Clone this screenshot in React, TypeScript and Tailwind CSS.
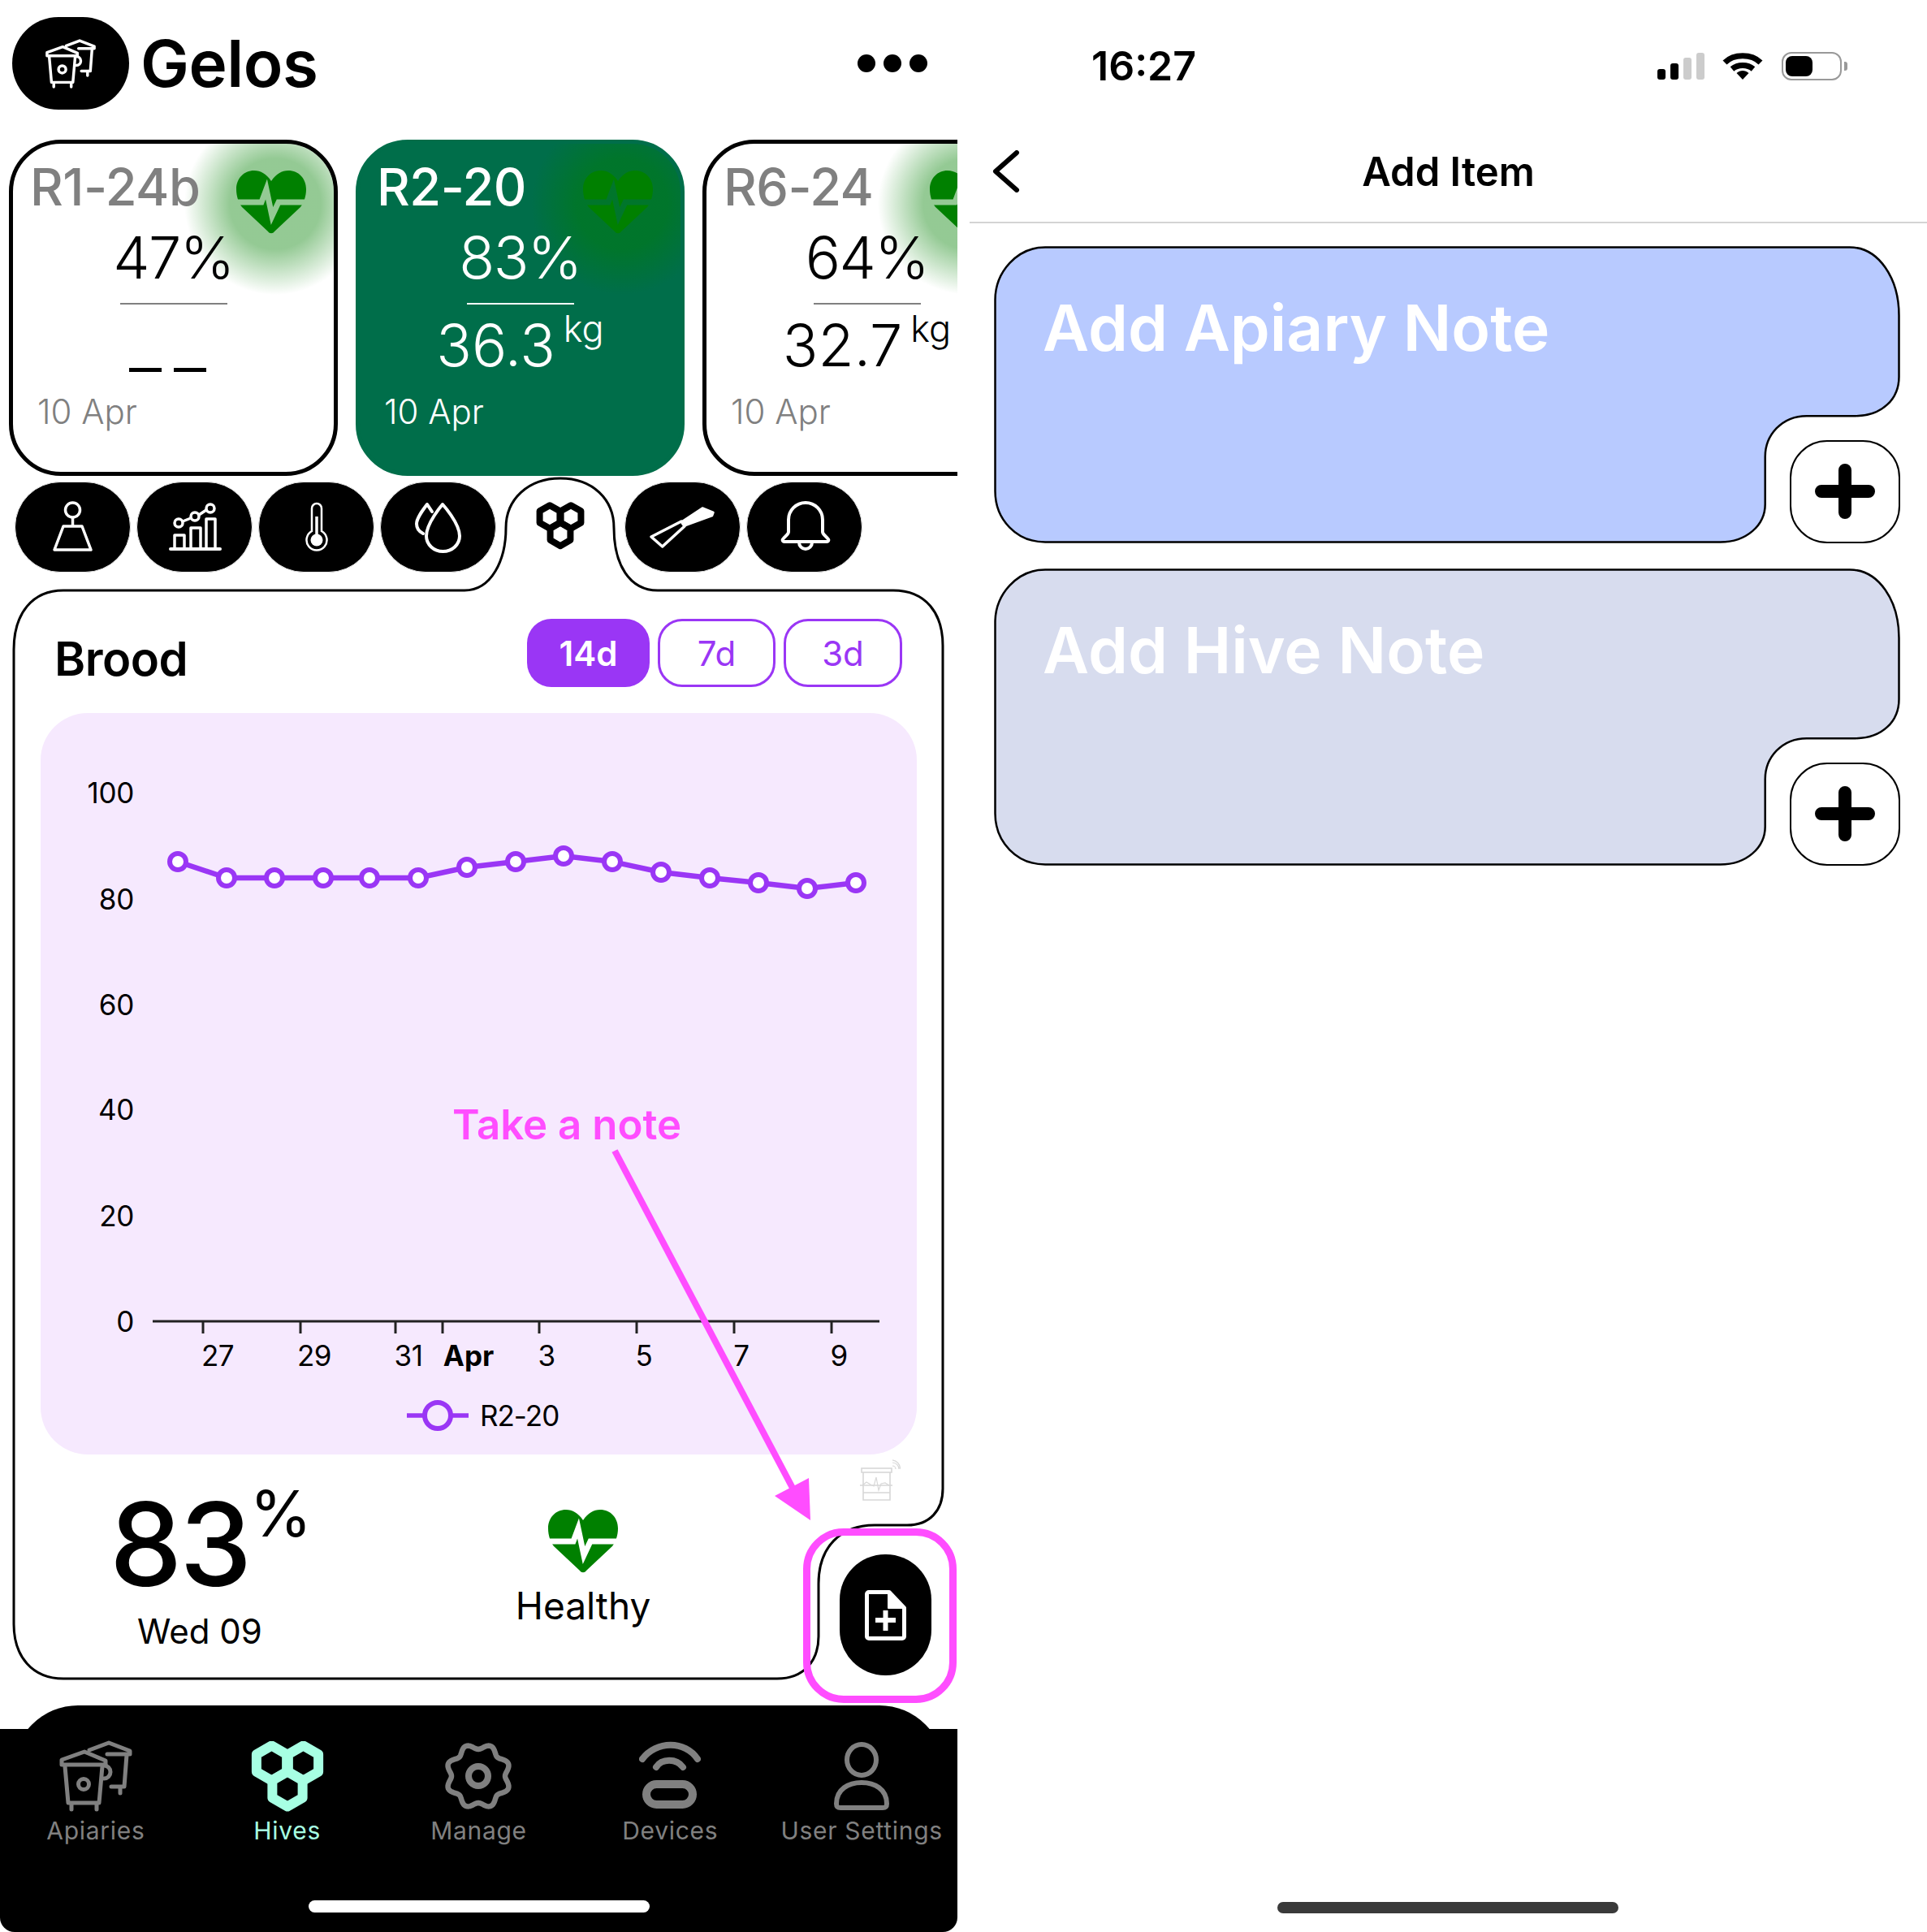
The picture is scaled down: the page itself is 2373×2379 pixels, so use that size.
import React from "react";

const hex = (cx: number, cy: number, r: number) => {
  const w = r * 0.866;
  return `M${cx} ${cy - r}L${cx + w} ${cy - r / 2}V${cy + r / 2}L${cx} ${cy + r}L${cx - w} ${cy + r / 2}V${cy - r / 2}Z`;
};

function Honeycomb({ className, stroke }: { className: string; stroke: string }) {
  return (
    <svg viewBox="0 0 90 87" className={className} fill="none" stroke={stroke} strokeWidth={12} strokeLinejoin="round">
      <path d={hex(25.5, 27, 21.5)} />
      <path d={hex(64.5, 27, 21.5)} />
      <path d={hex(45, 59, 21.5)} />
    </svg>
  );
}

function HiveIcon({ className, stroke }: { className: string; stroke: string }) {
  return (
    <svg viewBox="0 0 92 88" className={className} fill="none" stroke={stroke} strokeWidth={5} strokeLinejoin="round" strokeLinecap="round">
      <path d="M4 30V24L32 14L58 25V30Z" />
      <path d="M8 32L12 77H50L54 32" />
      <path d="M16 78V85M47 78V85" />
      <circle cx="31" cy="54" r="6.5" />
      <path d="M38 12L62 3L88 13V17H60" />
      <path d="M84 18L81 57H65" />
      <path d="M76 58V65" />
      <path d="M56 31a8 8 0 0 1 0 16" />
    </svg>
  );
}

function Heart({ id, className }: { id: string; className: string }) {
  return (
    <svg viewBox="0 0 86 78" className={className}>
      <mask id={id} maskUnits="userSpaceOnUse" x="0" y="0" width="86" height="78">
        <rect width="86" height="78" fill="white" />
        <polyline points="-2,39 31,39 37,23 44,56 52,39 88,39" fill="none" stroke="black" strokeWidth="7" />
      </mask>
      <path
        mask={`url(#${id})`}
        fill="#008000"
        d="M43 13C37 4 30 0 22 0C9 0 0 10 0 23C0 32 3 40 7 45L39 75C41 78 45 78 47 75L79 45C83 40 86 32 86 23C86 10 77 0 64 0C56 0 49 4 43 13Z"
      />
    </svg>
  );
}

function WeightIcon() {
  return (
    <svg viewBox="0 0 60 64" className="w-[60px] h-[64px]" fill="none" stroke="white" strokeWidth={3.5} strokeLinejoin="round">
      <circle cx="29.5" cy="11" r="9" />
      <path d="M29.5 20V31" />
      <path d="M18 31H41L52 60H7Z" />
    </svg>
  );
}

function BarsIcon() {
  return (
    <svg viewBox="0 0 68 62" className="w-[68px] h-[62px]" fill="none" stroke="white" strokeWidth={3.5} strokeLinejoin="round" strokeLinecap="round">
      <path d="M4 58H65" strokeWidth={4} />
      <path d="M9 57V41H21V57M29 57V32H41V57M48 57V21H59V57" />
      <circle cx="14" cy="26" r="5" />
      <circle cx="34" cy="18" r="5" />
      <circle cx="53" cy="8" r="5" />
      <path d="M19 24L29 20M39 16L48 10" />
    </svg>
  );
}

function ThermoIcon() {
  return (
    <svg viewBox="0 0 28 62" className="w-[28px] h-[62px]" fill="none" stroke="white" strokeWidth={2.5}>
      <path d="M8 36V8a6 6 0 0 1 12 0V36a12.5 12.5 0 1 1 -12 0Z" />
      <path d="M14 18V45" strokeWidth={3.5} />
      <circle cx="14" cy="47" r="7.5" fill="white" stroke="none" />
    </svg>
  );
}

function DropsIcon() {
  return (
    <svg viewBox="0 0 64 66" className="w-[64px] h-[66px]" fill="none" stroke="white" strokeWidth={4} strokeLinecap="round" strokeLinejoin="round">
      <path d="M37 5C37 5 17 28 17 44a20.5 19 0 0 0 41 0C58 28 37 5 37 5Z" />
      <path d="M24 14L18 5C12 13 5 22 5 29C5 35 9 39 13 41" />
    </svg>
  );
}

function ToolIcon() {
  return (
    <svg viewBox="0 0 86 56" className="w-[86px] h-[56px]" stroke="white" strokeLinejoin="round">
      <path d="M42 21L67 4.5L80.5 10L79 14L46 26Z" fill="white" strokeWidth={2.5} />
      <path d="M4 40L41 21L45 27L17.7 52Z" fill="none" strokeWidth={3.5} />
    </svg>
  );
}

function BellIcon() {
  return (
    <svg viewBox="0 0 66 64" className="w-[66px] h-[64px]" fill="none" stroke="white" strokeWidth={4} strokeLinejoin="round">
      <path d="M13 23a21 21 0 0 1 42 0V38C55 41 60 44 62 47a2 2 0 0 1 -2 3H8a2 2 0 0 1 -2 -3C8 44 13 41 13 38Z" />
      <path d="M26 51a8 8 0 0 0 16 0" />
    </svg>
  );
}

function GearIcon() {
  const pts: string[] = [];
  for (let i = 0; i < 160; i++) {
    const t = (i / 160) * Math.PI * 2 - Math.PI / 2;
    const r = 36.5 - 3.5 * Math.cos(8 * (t + Math.PI / 2));
    pts.push(`${(44 + r * Math.cos(t)).toFixed(2)},${(44 + r * Math.sin(t)).toFixed(2)}`);
  }
  return (
    <svg viewBox="0 0 88 88" className="w-[88px] h-[88px]" fill="none" stroke="#808080">
      <polygon points={pts.join(" ")} strokeWidth={6.5} strokeLinejoin="round" />
      <circle cx="44" cy="44" r="12" strokeWidth={8} />
    </svg>
  );
}

function DeviceIcon() {
  return (
    <svg viewBox="0 0 76 88" className="w-[76px] h-[88px]" fill="none" stroke="#808080" strokeLinecap="round">
      <path d="M3 22C20 -1 56 -1 71 22" strokeWidth={8} transform="translate(1 1)" />
      <path d="M21 33C28 22 46 22 54 33" strokeWidth={8} />
      <rect x="9" y="54" width="57" height="25" rx="12.5" strokeWidth={10} />
    </svg>
  );
}

function UserIcon() {
  return (
    <svg viewBox="0 0 72 88" className="w-[72px] h-[88px]" fill="none" stroke="#808080" strokeWidth={6} strokeLinejoin="round">
      <ellipse cx="36" cy="24" rx="18" ry="19" />
      <path d="M5 78C5 60 20 52 36 52C52 52 67 60 67 78C67 82 65 83 62 83H10C7 83 5 82 5 78Z" />
    </svg>
  );
}

function NoteDoc() {
  return (
    <svg viewBox="0 0 51 62" className="w-[51px] h-[62px]" fill="none" stroke="white" strokeWidth={5} strokeLinejoin="round">
      <path d="M5 2.5H30L48.5 22V57a2.5 2.5 0 0 1 -2.5 2.5H5a2.5 2.5 0 0 1 -2.5 -2.5V5a2.5 2.5 0 0 1 2.5 -2.5Z" />
      <path d="M29 3L48 22H29Z" fill="white" strokeWidth={2} />
      <path d="M13 37H38M25.5 25V50" strokeWidth={6} />
    </svg>
  );
}

function SensorIcon() {
  return (
    <svg viewBox="0 0 50 51" className="w-[50px] h-[51px]" fill="none" stroke="#d8d8d8" strokeWidth={1.6}>
      <rect x="2" y="11" width="37" height="5" />
      <path d="M4 16V50H37V16" />
      <path d="M0 32H40M4 41H37" />
      <polyline points="3,32 8,28 13,31 17,33 20,22 23,38 26,30 31,29 36,32" strokeWidth={1.2} />
      <path d="M40 8a4 4 0 0 1 4 4M40 4a8 8 0 0 1 8 8M40 0.8a11 11 0 0 1 9.5 11" strokeWidth={1.2} />
    </svg>
  );
}

function Card({ name, pct, kg, active, id }: { name: string; pct: string; kg?: string; active?: boolean; id: string }) {
  return (
    <div
      className={
        active
          ? "relative w-[405px] h-[414px] shrink-0 rounded-[64px] border-[5px] border-[#006e4a] bg-[#006e4a] text-white overflow-hidden flex flex-col items-center"
          : "relative w-[405px] h-[414px] shrink-0 rounded-[64px] border-[5px] border-black bg-white text-black overflow-hidden flex flex-col items-center"
      }
    >
      <div className="absolute left-[211px] top-[-38px] w-[224px] h-[224px] bg-[radial-gradient(closest-side,rgba(0,128,0,0.42)_50%,rgba(0,128,0,0)_100%)]" />
      <div className="absolute left-[275px] top-[33px]">
        <Heart id={id} className="w-[86px] h-[78px]" />
      </div>
      <div className={active ? "relative self-start ml-[21px] mt-[23px] text-[63px] leading-[60px] tracking-[-0.5px] font-medium text-white" : "relative self-start ml-[21px] mt-[23px] text-[63px] leading-[60px] tracking-[-0.5px] font-medium text-[#808080]"}>
        {name}
      </div>
      <div className="relative mt-[22px] text-[72px] leading-[70px] tracking-[-1.5px] font-light">{pct}</div>
      <div className={active ? "relative mt-[21px] w-[132px] h-[2px] bg-white" : "relative mt-[21px] w-[132px] h-[2px] bg-[#808080]"} />
      {kg ? (
        <div className="relative mt-[15px] flex items-start gap-[10px] h-[70px]">
          <span className="text-[72px] leading-[70px] font-light">{kg}</span>
          <span className="text-[45px] leading-[44px] font-light -mt-[7px]">kg</span>
        </div>
      ) : (
        <div className="relative mt-[15px] flex items-end gap-[15px] h-[70px] pb-[2px] -ml-[14px]">
          <div className="w-[40px] h-[5px] bg-black" />
          <div className="w-[40px] h-[5px] bg-black" />
        </div>
      )}
      <div className={active ? "relative self-start ml-[30px] mt-[27px] text-[42px] leading-[40px] font-light text-white" : "relative self-start ml-[30px] mt-[27px] text-[42px] leading-[40px] font-light text-[#808080]"}>
        10 Apr
      </div>
    </div>
  );
}

function TabPill({ children }: { children: React.ReactNode }) {
  return (
    <div className="w-[143px] h-[112px] rounded-[56px] bg-black border border-[#e6e6e6] flex items-center justify-center shrink-0">
      {children}
    </div>
  );
}

const DATA: [number, number][] = [
  [219, 1060], [279, 1080], [338, 1080], [398, 1080], [455, 1080], [515, 1080], [575, 1067], [635, 1060],
  [694, 1053], [754, 1060], [814, 1073], [874, 1080], [934, 1086], [994, 1093], [1054, 1086],
];
const YS: [string, number][] = [["100", 975], ["80", 1106], ["60", 1236], ["40", 1365], ["20", 1496], ["0", 1626]];
const TICKS = [250, 370, 487, 545, 664, 784, 904, 1024];
const XS: [string, number][] = [["27", 268], ["29", 387], ["31", 503], ["3", 673], ["5", 793], ["7", 913], ["9", 1033]];

function Chart() {
  return (
    <svg viewBox="50 877 1079 913" className="w-full h-full">
      {YS.map(([t, y]) => (
        <text key={t} x={165} y={y + 13} fontSize={35} letterSpacing={-0.3} textAnchor="end" fill="#000">{t}</text>
      ))}
      <path d="M188 1626H1083" stroke="#222" strokeWidth={3} />
      {TICKS.map((x) => (
        <path key={x} d={`M${x} 1626V1641`} stroke="#222" strokeWidth={3} />
      ))}
      {XS.map(([t, x]) => (
        <text key={t} x={x} y={1681} fontSize={35} letterSpacing={-0.5} textAnchor="middle" fill="#000">{t}</text>
      ))}
      <text x={577} y={1681} fontSize={35} fontWeight={700} textAnchor="middle" fill="#000">Apr</text>
      <polyline points={DATA.map((p) => p.join(",")).join(" ")} fill="none" stroke="#9a36f5" strokeWidth={6.5} />
      {DATA.map(([x, y]) => (
        <circle key={x} cx={x} cy={y} r={10} fill="white" stroke="#9a36f5" strokeWidth={6} />
      ))}
      <path d="M501 1742H577" stroke="#9a36f5" strokeWidth={5.5} />
      <circle cx={539} cy={1742} r={16} fill="#f6e9fe" stroke="#9a36f5" strokeWidth={6} />
      <text x={591} y={1755} fontSize={35} letterSpacing={-1} fill="#000">R2-20</text>
    </svg>
  );
}

function NavItem({ label, active, children }: { label: string; active?: boolean; children: React.ReactNode }) {
  return (
    <div className="flex flex-col items-center">
      <div className="h-[88px] flex items-center justify-center">{children}</div>
      <div className={active ? "mt-[8px] text-[30px] leading-[30px] tracking-[0.7px] text-[#a7ffe3] whitespace-nowrap" : "mt-[8px] text-[30px] leading-[30px] tracking-[0.7px] text-[#808080] whitespace-nowrap"}>
        {label}
      </div>
    </div>
  );
}

function NoteCard({ title, fill }: { title: string; fill: string }) {
  return (
    <div className="relative w-[1116px] h-[366px] flex flex-col justify-between">
      <svg viewBox="0 0 1114 364" preserveAspectRatio="none" className="absolute inset-0 w-full h-full">
        <path
          d="M63 1.5H1052C1088 1.5 1112.5 40 1112.5 85V160C1112.5 187 1092 208 1059 208H999C968 208 948 232 948 258V316C948 342 925 362.5 893 362.5H63C28 362.5 1.5 335 1.5 300V66C1.5 32 28 1.5 63 1.5Z"
          fill={fill}
          stroke="#000"
          strokeWidth={2.5}
        />
      </svg>
      <div className="relative ml-[60px] mt-[55px] text-[78.5px] leading-[92px] font-semibold text-white">{title}</div>
      <div className="relative self-end w-[136px] h-[127px] rounded-[46px] border-[2.5px] border-black bg-white flex items-center justify-center">
        <svg viewBox="0 0 74 68" className="w-[74px] h-[68px] -mt-[1px]" stroke="#000" strokeWidth={16} strokeLinecap="round">
          <path d="M8 34H66M37 8V60" />
        </svg>
      </div>
    </div>
  );
}

export default function App() {
  return (
    <div className="w-[2373px] h-[2379px] bg-white flex overflow-hidden [font-family:Inter,sans-serif] text-black">
      {/* Left phone */}
      <div className="relative w-[1179px] h-[2379px] shrink-0 flex flex-col overflow-hidden">
        <div className="h-[172px] flex items-start pt-[21px] pl-[15px]">
          <div className="w-[144px] h-[114px] rounded-[57px] bg-black flex items-center justify-center">
            <HiveIcon className="w-[64px] h-[61px]" stroke="white" />
          </div>
          <div className="ml-[14px] text-[80px] leading-[114px] tracking-[-0.5px] font-semibold">Gelos</div>
          <div className="ml-auto mr-[37px] h-[114px] flex items-center gap-[10px]">
            <div className="w-[22px] h-[22px] rounded-full bg-black" />
            <div className="w-[22px] h-[22px] rounded-full bg-black" />
            <div className="w-[22px] h-[22px] rounded-full bg-black" />
          </div>
        </div>

        <div className="flex gap-[22px] pl-[11px]">
          <Card name="R1-24b" pct="47%" id="h1" />
          <Card name="R2-20" pct="83%" kg="36.3" active id="h2" />
          <Card name="R6-24" pct="64%" kg="32.7" id="h3" />
        </div>

        <div className="relative">
          <svg viewBox="0 586 1179 1490" className="absolute left-0 top-0 w-[1179px] h-[1490px]">
            <path
              d="M17 800C17 755 40 727 78 727H572C605 727 623 690 623 650C623 615 650 589 690 589C730 589 756 615 756 650C756 695 775 727 810 727H1100C1140 727 1161 755 1161 795V1833C1161 1860 1145 1878 1117 1878H1077C1035 1878 1008 1905 1008 1950V2015C1008 2045 990 2067 957 2067H78C40 2067 17 2040 17 2000Z"
              fill="white"
              stroke="#000"
              strokeWidth={3}
            />
          </svg>

          <div className="relative flex gap-[7px] pl-[18px] pt-[7px]">
            <TabPill><WeightIcon /></TabPill>
            <TabPill><BarsIcon /></TabPill>
            <TabPill><ThermoIcon /></TabPill>
            <TabPill><DropsIcon /></TabPill>
            <div className="w-[144px] h-[112px] flex items-center justify-center shrink-0">
              <Honeycomb className="w-[60px] h-[61px] -mt-[4px]" stroke="#000" />
            </div>
            <TabPill><ToolIcon /></TabPill>
            <TabPill><BellIcon /></TabPill>
          </div>

          <div className="relative ml-[17px] w-[1144px] mt-[22px]">
            <div className="pt-[35px] pl-[50px] pr-[50px] flex justify-between items-start">
              <div className="mt-[8px] text-[58px] leading-[83px] tracking-[-0.5px] font-semibold">Brood</div>
              <div className="flex gap-[10px]">
                <div className="w-[151px] h-[84px] rounded-[30px] bg-[#9a36f5] text-white text-[42px] font-semibold flex items-center justify-center">14d</div>
                <div className="w-[145px] h-[84px] rounded-[30px] border-[3px] border-[#9a36f5] text-[#9a36f5] text-[42px] flex items-center justify-center">7d</div>
                <div className="w-[146px] h-[84px] rounded-[30px] border-[3px] border-[#9a36f5] text-[#9a36f5] text-[42px] flex items-center justify-center">3d</div>
              </div>
            </div>

            <div className="mt-[25px] ml-[33px] mr-[32px] h-[913px] rounded-[58px] bg-[#f6e9fe]">
              <Chart />
            </div>

            <div className="relative h-[283px] flex items-start">
              <div className="ml-[118px] w-[222px] flex flex-col items-center">
                <div className="w-full flex items-start mt-[42px] h-[136px] whitespace-nowrap">
                  <span className="text-[142px] leading-[136px] tracking-[-3px] font-medium">83</span>
                  <span className="text-[78px] leading-[78px] -mt-[8px]">%</span>
                </div>
                <div className="mt-[19px] text-[42px] leading-[42px]">Wed 09</div>
              </div>
              <div className="ml-[261px] w-[200px] flex flex-col items-center mt-[68px]">
                <Heart id="h4" className="w-[86px] h-[78px]" />
                <div className="mt-[17px] text-[46px] leading-[46px]">Healthy</div>
              </div>
              <div className="ml-[216px] mt-[123px] w-[113px] h-[149px] rounded-[56px] bg-black flex items-center justify-center shrink-0">
                <NoteDoc />
              </div>
              <div className="absolute left-[1042px] top-[6px]">
                <SensorIcon />
              </div>
            </div>
          </div>
        </div>

        <div className="mt-auto flex flex-col">
          <div className="h-[29px] overflow-hidden">
            <div className="mx-[16px] h-[160px] rounded-[80px] bg-black" />
          </div>
          <div className="h-[250px] bg-black rounded-b-[18px] pt-[14px] flex flex-col">
            <div className="grid grid-cols-5">
              <NavItem label="Apiaries"><HiveIcon className="w-[92px] h-[88px]" stroke="#808080" /></NavItem>
              <NavItem label="Hives" active><Honeycomb className="w-[90px] h-[87px]" stroke="#a7ffe3" /></NavItem>
              <NavItem label="Manage"><GearIcon /></NavItem>
              <NavItem label="Devices"><DeviceIcon /></NavItem>
              <NavItem label="User Settings"><UserIcon /></NavItem>
            </div>
            <div className="mt-auto mb-[24px] mx-auto w-[420px] h-[15px] rounded-full bg-white" />
          </div>
        </div>

        {/* Annotation overlay */}
        <div className="absolute left-[557px] top-[1358px] text-[51px] leading-[54px] font-semibold text-[#ff4dff] whitespace-nowrap">Take a note</div>
        <svg viewBox="0 0 1179 2379" className="absolute inset-0 w-[1179px] h-[2379px] pointer-events-none">
          <path d="M757 1417L978 1836" stroke="#ff4dff" strokeWidth={8} />
          <path d="M996 1820L954 1842L998 1872Z" fill="#ff4dff" />
        </svg>
        <div className="absolute left-[989px] top-[1882px] w-[189px] h-[215px] rounded-[50px] border-[9px] border-[#ff4dff]" />
      </div>

      {/* Right phone */}
      <div className="flex-1 flex flex-col pl-[15px]">
        <div className="h-[99px] pt-[64px] flex items-center justify-between pl-[150px] pr-[98px]">
          <div className="text-[50px] leading-[35px] font-semibold">16:27</div>
          <div className="flex items-center">
            <div className="flex items-end gap-[6px] h-[33px]">
              <div className="w-[10px] h-[13px] rounded-[3px] bg-black" />
              <div className="w-[10px] h-[20px] rounded-[3px] bg-black" />
              <div className="w-[10px] h-[27px] rounded-[3px] bg-[#cccccc]" />
              <div className="w-[10px] h-[33px] rounded-[3px] bg-[#cccccc]" />
            </div>
            <svg viewBox="0 0 50 33" className="w-[50px] h-[33px] ml-[22px]" fill="none" stroke="#000" strokeWidth={7}>
              <path d="M3 12C14 1 36 1 47 12" />
              <path d="M12 20C19 14 31 14 38 20" />
              <path d="M17.5 25C22 21 28 21 32.5 25L25 33Z" fill="#000" stroke="none" />
            </svg>
            <div className="ml-[23px] w-[74px] h-[35px] rounded-[12px] border-[2.5px] border-[#999999] p-[3px] flex">
              <div className="w-[33px] h-full rounded-[8px] bg-black" />
            </div>
            <div className="ml-[3px] w-[4px] h-[11px] rounded-r-[3px] bg-[#999999]" />
          </div>
        </div>

        <div className="mt-[76px] h-[100px] grid grid-cols-[1fr_auto_1fr] items-start border-b-2 border-[#d4d4d4]">
          <svg viewBox="0 0 34 52" className="w-[34px] h-[52px] ml-[28px] mt-[10px]" fill="none" stroke="#000" strokeWidth={6} strokeLinecap="round" strokeLinejoin="round">
            <path d="M30 3L4 26L30 49" />
          </svg>
          <div className="text-[49px] leading-[74px] font-semibold">Add Item</div>
          <div />
        </div>

        <div className="mt-[28px] ml-[30px] flex flex-col gap-[31px]">
          <NoteCard title="Add Apiary Note" fill="#b8caff" />
          <NoteCard title="Add Hive Note" fill="#d7dcee" />
        </div>

        <div className="mt-auto mb-[23px] ml-[379px] w-[420px] h-[14px] rounded-full bg-[#3a3a3a]" />
      </div>
    </div>
  );
}
